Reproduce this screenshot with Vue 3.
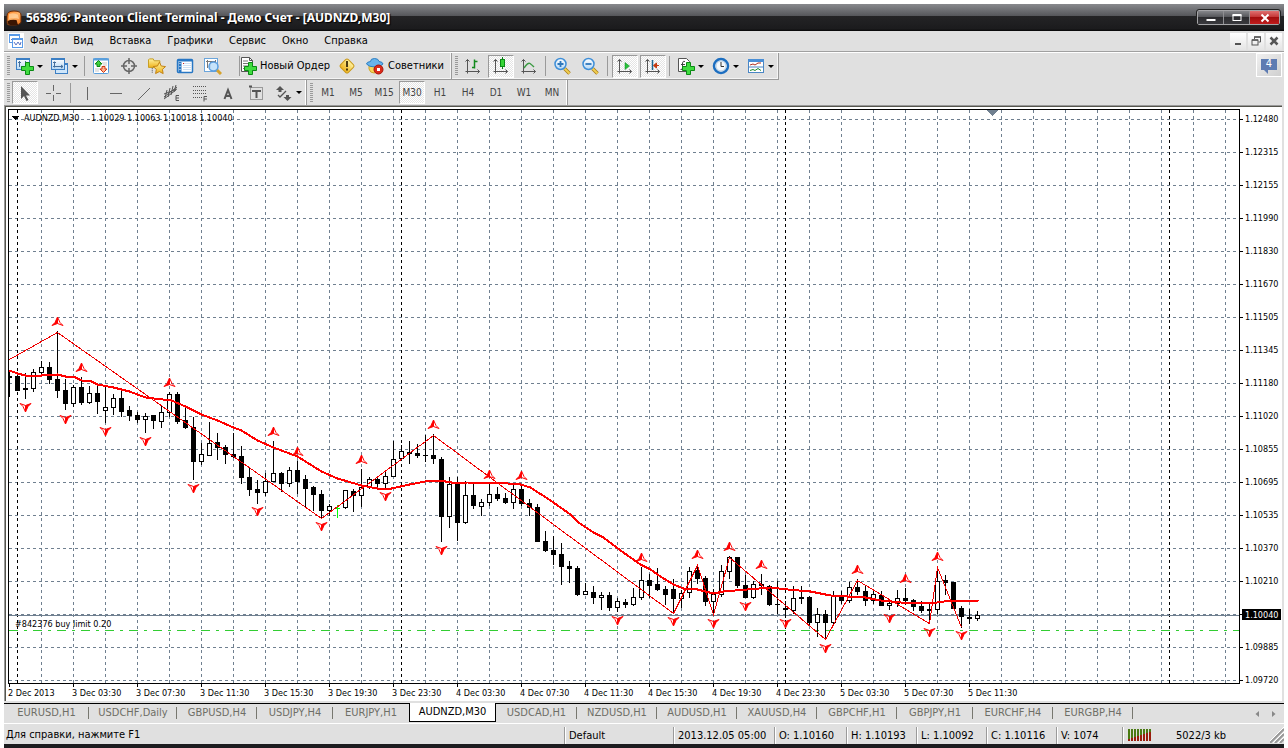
<script setup>
const menus = ['Файл', 'Вид', 'Вставка', 'Графики', 'Сервис', 'Окно', 'Справка']

const standardBar = [
  { icon: 'new-chart', label: 'Новый график', drop: true },
  { icon: 'profiles', label: 'Профили', drop: true },
  { sep: 'a' },
  { icon: 'market', label: 'Обзор рынка' },
  { icon: 'target', label: 'Окно данных' },
  { icon: 'navigator', label: 'Навигатор' },
  { icon: 'terminal', label: 'Терминал' },
  { icon: 'tester', label: 'Тестер стратегий' },
  { sep: 'b' },
  { icon: 'order', text: 'Новый Ордер' },
  { icon: 'warning', label: 'Редактор' },
  { icon: 'experts', text: 'Советники' }
]
const chartBar = [
  { icon: 'bars', label: 'Бары' },
  { icon: 'candles', label: 'Свечи', on: true },
  { icon: 'line', label: 'Линия' },
  { sep: 'c' },
  { icon: 'zoom-in', label: 'Увеличить' },
  { icon: 'zoom-out', label: 'Уменьшить' },
  { sep: 'd' },
  { icon: 'scroll', label: 'Автопрокрутка', on: true },
  { icon: 'shift', label: 'Сдвиг графика', on: true },
  { sep: 'c' },
  { icon: 'indicators', label: 'Индикаторы', drop: true },
  { icon: 'clock', label: 'Периоды', drop: true },
  { icon: 'template', label: 'Шаблоны', drop: true }
]
const drawBar = [
  { icon: 'cursor', label: 'Курсор', on: true },
  { icon: 'cross', label: 'Перекрестие' },
  { sep: 'd' },
  { icon: 'vline', label: 'Вертикальная линия' },
  { icon: 'hline', label: 'Горизонтальная линия' },
  { icon: 'trend', label: 'Трендовая линия' },
  { icon: 'channel', label: 'Канал' },
  { icon: 'fibo', label: 'Фибоначчи' },
  { icon: 'text', label: 'Текст' },
  { icon: 'label', label: 'Метка' },
  { icon: 'arrows', label: 'Стрелки', drop: true }
]
const periods = ['M1', 'M5', 'M15', 'M30', 'H1', 'H4', 'D1', 'W1', 'MN']

const tabs = [
  ['EURUSD,H1', 85], ['USDCHF,Daily', 88], ['GBPUSD,H4', 80], ['USDJPY,H4', 76], ['EURJPY,H1', 76],
  ['AUDNZD,M30', 87], ['USDCAD,H1', 81], ['NZDUSD,H1', 80], ['AUDUSD,H1', 80], ['XAUUSD,H4', 80],
  ['GBPCHF,H1', 80], ['GBPJPY,H1', 76], ['EURCHF,H4', 80], ['EURGBP,H4', 80]
]
const activeTab = 5

const prices = ['1.12480', '1.12315', '1.12155', '1.11990', '1.11830', '1.11670', '1.11505', '1.11345', '1.11180',
  '1.11020', '1.10855', '1.10695', '1.10535', '1.10370', '1.10210', '', '1.09885', '1.09720']
const times = ['2 Dec 2013', '3 Dec 03:30', '3 Dec 07:30', '3 Dec 11:30', '3 Dec 15:30', '3 Dec 19:30', '3 Dec 23:30',
  '4 Dec 03:30', '4 Dec 07:30', '4 Dec 11:30', '4 Dec 15:30', '4 Dec 19:30', '4 Dec 23:30', '5 Dec 03:30', '5 Dec 07:30', '5 Dec 11:30']

const gridX = Array.from({ length: 80 }, (_, i) => 32 + i * 32)
const gridY = Array.from({ length: 18 }, (_, i) => 9 + i * 33)
const dayX = [8, 392, 776, 1160]

/* body top, body bottom, high, low, 1 = falling / 0 = rising */
const raw = [
  [376, 378, 372, 397, 1], [376, 391, 375, 391, 1], [388, 390, 373, 399, 0], [372, 389, 369, 392, 0], [367, 373, 361, 376, 0],
  [367, 380, 362, 384, 1], [379, 391, 331, 398, 1], [390, 404, 379, 410, 1], [387, 404, 385, 407, 0], [387, 403, 377, 405, 1],
  [393, 403, 386, 404, 0], [393, 402, 383, 414, 1], [407, 411, 385, 423, 0], [398, 408, 394, 415, 0], [398, 412, 390, 417, 1],
  [410, 416, 406, 421, 1], [415, 420, 412, 423, 1], [416, 420, 413, 433, 0], [415, 421, 415, 429, 1], [412, 422, 405, 428, 0],
  [394, 413, 392, 417, 0], [394, 422, 392, 424, 1], [420, 428, 405, 429, 1], [427, 462, 417, 480, 1], [454, 462, 443, 465, 0],
  [443, 456, 422, 456, 0], [442, 448, 433, 460, 1], [447, 455, 445, 464, 1], [454, 457, 433, 458, 1], [456, 478, 446, 484, 1],
  [477, 490, 467, 496, 1], [489, 493, 480, 504, 1], [481, 493, 473, 496, 0], [473, 482, 441, 482, 0], [473, 484, 472, 492, 1],
  [470, 484, 467, 487, 0], [470, 482, 461, 494, 1], [479, 489, 475, 507, 1], [487, 495, 486, 511, 1], [494, 511, 490, 518, 1],
  [506, 511, 504, 516, 0], [508, 509, 505, 518, 2], [490, 508, 490, 509, 0], [491, 496, 489, 512, 1], [487, 496, 469, 507, 0],
  [479, 487, 477, 489, 0], [479, 484, 478, 488, 1], [476, 484, 471, 488, 0], [459, 477, 441, 477, 0], [451, 459, 445, 459, 0],
  [452, 454, 441, 464, 1], [453, 456, 444, 458, 1], [455, 456, 435, 462, 1], [455, 459, 434, 464, 1], [459, 517, 457, 542, 1],
  [484, 517, 477, 528, 0], [484, 523, 477, 541, 1], [495, 523, 481, 524, 0], [495, 506, 484, 509, 1], [502, 507, 499, 516, 0],
  [494, 503, 483, 506, 0], [494, 499, 487, 501, 1], [498, 503, 493, 504, 1], [489, 503, 484, 509, 0], [489, 504, 485, 506, 1],
  [503, 508, 499, 516, 1], [507, 542, 504, 542, 1], [541, 551, 531, 552, 1], [550, 555, 536, 565, 1], [554, 567, 543, 585, 1],
  [566, 569, 561, 583, 1], [568, 595, 566, 596, 1], [591, 595, 583, 595, 0], [592, 598, 586, 604, 1], [595, 598, 592, 610, 0],
  [595, 608, 592, 611, 1], [601, 608, 598, 612, 0], [602, 605, 599, 608, 1], [597, 605, 588, 606, 0], [580, 598, 567, 600, 0],
  [580, 586, 574, 598, 1], [584, 590, 568, 591, 1], [589, 595, 586, 605, 1], [589, 599, 579, 614, 1], [593, 599, 590, 608, 0],
  [571, 593, 567, 598, 0], [570, 579, 564, 584, 1], [578, 602, 576, 606, 1], [594, 602, 589, 616, 0], [571, 595, 565, 597, 0],
  [557, 572, 556, 579, 0], [557, 586, 557, 588, 1], [585, 598, 575, 598, 1], [584, 598, 581, 599, 0], [584, 586, 574, 595, 1],
  [586, 605, 585, 606, 1], [604, 605, 581, 614, 1], [608, 610, 601, 618, 1], [598, 611, 586, 614, 0], [597, 599, 586, 604, 1],
  [597, 623, 596, 626, 1], [614, 623, 608, 637, 0], [614, 623, 610, 640, 1], [595, 623, 591, 626, 0], [595, 601, 591, 604, 1],
  [587, 601, 582, 603, 0], [587, 592, 579, 595, 1], [591, 601, 586, 606, 1], [594, 601, 590, 604, 0], [595, 606, 591, 606, 1],
  [603, 606, 599, 610, 0], [598, 604, 590, 607, 0], [598, 601, 588, 605, 1], [600, 607, 599, 611, 1], [606, 611, 601, 613, 1],
  [609, 611, 602, 624, 1], [581, 610, 566, 614, 0], [580, 583, 575, 595, 1], [582, 609, 582, 609, 1], [608, 617, 606, 628, 1],
  [617, 619, 609, 624, 1], [615, 619, 611, 621, 0]
]
const kinds = ['up', 'down', 'flat']
const candles = raw.map(([t, b, h, l, k], i) => ({ x: i * 8, t: t - 110, b: b - 110, h: h - 110, l: l - 110, kind: kinds[k] }))

const line = pts => pts.map(([x, y]) => `${x - 8.5},${y - 109.5}`).join(' ')
const average = line([[9, 370], [17, 373], [25, 375], [41, 375], [57, 374], [65, 376], [75, 377], [81, 380], [91, 381], [97, 384], [113, 387], [129, 391],
  [145, 397], [153, 398], [171, 400], [185, 406], [201, 414], [217, 420], [233, 427], [241, 430], [257, 440], [273, 447], [297, 456],
  [321, 471], [337, 478], [361, 485], [377, 488], [391, 488], [409, 484], [430, 480], [439, 480], [457, 483], [467, 482], [495, 482], [520, 484],
  [530, 487], [550, 500], [570, 514], [578, 522], [593, 532], [603, 537], [620, 550], [640, 564], [650, 569], [660, 576], [673, 584],
  [683, 588], [697, 589], [713, 593], [723, 591], [747, 589], [770, 587], [787, 589], [810, 591], [830, 595], [847, 596],
  [860, 596], [880, 600], [900, 602], [930, 603], [950, 600], [978, 601]])
const zigzag = line([[9, 359], [57, 332], [321, 518], [433, 435], [673, 613], [697, 565], [713, 614], [729, 557], [825, 639],
  [857, 580], [929, 623], [937, 567], [961, 627]])
const upMarks = [[57, 321], [81, 367], [169, 382], [273, 431], [297, 451], [361, 459], [433, 424], [489, 474], [521, 475], [641, 557],
  [697, 554], [729, 546], [761, 564], [857, 569], [905, 578], [937, 556]]
const downMarks = [[25, 407], [65, 419], [105, 431], [145, 441], [193, 488], [257, 511], [321, 526], [385, 496], [441, 550], [617, 620],
  [673, 621], [713, 623], [745, 606], [785, 623], [825, 648], [889, 618], [929, 632], [961, 635]]
const at = ([x, y]) => `translate(${x - 8.5} ${y - 109.5})`
</script>

<template>
  <svg class="defs" aria-hidden="true">
    <defs>
      <linearGradient id="g-blue" x1="0" y1="0" x2="0" y2="1"><stop offset="0" stop-color="#fff" /><stop offset="1" stop-color="#b5d8f5" /></linearGradient>
      <linearGradient id="g-gold" x1="0" y1="0" x2="0" y2="1"><stop offset="0" stop-color="#fff3a0" /><stop offset="1" stop-color="#efb21c" /></linearGradient>
      <linearGradient id="g-orange" x1="0" y1="0" x2="1" y2="1"><stop offset="0" stop-color="#ff7a12" /><stop offset=".5" stop-color="#ffb46a" /><stop offset="1" stop-color="#e86a10" /></linearGradient>
      <path id="plus" d="M4 0h4v4h4v4h-4v4h-4v-4h-4v-4h4z" fill="#3fdc3f" stroke="#0a8a14" />
      <path id="axes" d="M3.500 16.500v-14M1.500 4.500l2-2 2 2M1.500 14.500h14M13.500 12.500l2 2-2 2" fill="none" stroke="#555" />
    </defs>
    <symbol id="i-new-chart" viewBox="0 0 18 18">
      <rect x=".5" y="1.500" width="13" height="11" fill="url(#g-blue)" stroke="#3c7fc4" /><path d="M1 2.500h12" stroke="#3c7fc4" />
      <path d="M3.500 4v6M2 5.500h3M9.500 4v5M5 9.500h3" stroke="#456f9c" fill="none" /><use href="#plus" x="5.500" y="5.500" />
    </symbol>
    <symbol id="i-profiles" viewBox="0 0 18 18">
      <rect x="4.500" y="6.500" width="12" height="10" fill="#cfe6fa" stroke="#3c7fc4" /><path d="M4 7.500h13" stroke="#3c7fc4" />
      <rect x=".5" y="1.500" width="13" height="11" fill="url(#g-blue)" stroke="#3c7fc4" /><path d="M1 2h12" stroke="#3c7fc4" stroke-width="2" />
      <path d="M3.500 4.500v6M2 9.500h10M2 5.500h3M10 8l2 1.500-2 1.500" stroke="#456f9c" fill="none" />
    </symbol>
    <symbol id="i-market" viewBox="0 0 18 18">
      <rect x="1.500" y="1.500" width="15" height="15" rx="1" fill="#fff" stroke="#5a9fdc" /><path d="M1 2.500h16" stroke="#5a9fdc" stroke-width="2" />
      <path d="M3 12h5M3 14h4M10 6h5M11 8h4" stroke="#c9c9c9" /><path d="M6.500 3.500l3.500 3.500h-2v2.500h-3v-2.500h-2z" fill="#3fcf3f" stroke="#0c8a14" /><path d="M11.500 15.500l-3.500-3.500h2v-2.500h3v2.500h2z" fill="#ffb190" stroke="#cf3a12" />
    </symbol>
    <symbol id="i-target" viewBox="0 0 18 18">
      <circle cx="9" cy="9" r="5.500" fill="none" stroke="#666" stroke-width="1.500" /><path d="M9 1v6M9 11v6M1 9h6M11 9h6" stroke="#666" stroke-width="1.500" />
    </symbol>
    <symbol id="i-navigator" viewBox="0 0 19 18">
      <path d="M.5 2.500l1-1h4l1 2h6v7h-12z" fill="url(#g-gold)" stroke="#c59a1c" /><path d="M4.500 11v5" stroke="#444" stroke-dasharray="1 1" />
      <path d="M12 5l2 4 4.500.6-3.300 3 .8 4.400-4-2.100-4 2.100.8-4.400-3.300-3 4.500-.6z" fill="url(#g-gold)" stroke="#c07e10" />
    </symbol>
    <symbol id="i-terminal" viewBox="0 0 18 18">
      <rect x="1.500" y="2.500" width="15" height="13" rx="1" fill="#fff" stroke="#2877c4" stroke-width="1.500" /><path d="M2 3.500h14" stroke="#2877c4" stroke-width="2" />
      <path d="M4 5v10" stroke="#2877c4" stroke-width="3" /><path d="M4 6v8" stroke="#fff" stroke-dasharray="1 2" /><path d="M7 6.500h8M7 8.500h8M7 10.500h8M7 12.500h8" stroke="#cfe0f2" /><path d="M7 6.500h1" stroke="#d02020" />
    </symbol>
    <symbol id="i-tester" viewBox="0 0 18 18">
      <rect x=".5" y="1.500" width="13" height="13" fill="#fff" stroke="#6ba5db" /><path d="M3.500 3v8M6.500 4v7M11.500 3v4M2 4.500h10" stroke="#777" />
      <path d="M12 12l5 5" stroke="#d6a22b" stroke-width="3" /><circle cx="9.500" cy="9.500" r="4.500" fill="#bfe0fb" fill-opacity=".9" stroke="#5a9ee0" stroke-width="1.500" />
    </symbol>
    <symbol id="i-order" viewBox="1 0 18 18">
      <path d="M1.500.5h8l3 3v11h-11z" fill="#fff" stroke="#555" /><path d="M9.500.5v3h3" fill="none" stroke="#555" /><path d="M3 4h5M3 6.500h8M3 9h5M3 11.500h4" stroke="#777" stroke-width="1" /><use href="#plus" x="4.500" y="5.500" />
    </symbol>
    <symbol id="i-warning" viewBox="0 0 18 18">
      <rect x="3.500" y="3.500" width="11" height="11" rx="2" transform="rotate(45 9 9)" fill="url(#g-gold)" stroke="#c9981c" /><path d="M9 4v6M9 11.500v2" stroke="#4c3a10" stroke-width="2" />
    </symbol>
    <symbol id="i-experts" viewBox="1 0 18 18">
      <path d="M4 8q6 3 11 0v4q-2 4-6 4t-5-4z" fill="#f7d65a" stroke="#cda42a" /><path d="M1.500 7q0-2 4-2.500 0-3 4-3t4.500 3q4 .5 4 2.500-2 3-8 3t-8.500-3z" fill="#69b4ec" stroke="#2c7ec2" />
      <circle cx="13.500" cy="12.500" r="4.500" fill="#dc2a1a" stroke="#a81408" /><rect x="12" y="11" width="3" height="3" fill="#fff" />
    </symbol>
    <symbol id="i-bars" viewBox="0 0 18 18"><use href="#axes" /><path d="M10.500 2.500v9M10.500 4.500h3M8 10.500h3" stroke="#128a1c" stroke-width="1.500" fill="none" /></symbol>
    <symbol id="i-candles" viewBox="0 0 18 18"><use href="#axes" /><path d="M10.500 0v12" stroke="#0a7a14" /><rect x="8.500" y="2.500" width="4" height="7" fill="#35d435" stroke="#0a8a14" /></symbol>
    <symbol id="i-line" viewBox="0 0 18 18"><use href="#axes" /><path d="M4 11q4-6 6-4.500t4 3.500" stroke="#3a9a42" stroke-width="1.500" fill="none" /></symbol>
    <symbol id="i-scroll" viewBox="0 0 18 18"><use href="#axes" /><path d="M9 5.500v7l4.500-3.500z" fill="#28c23a" stroke="#0b8a1c" stroke-width=".5" /></symbol>
    <symbol id="i-shift" viewBox="0 0 18 18"><use href="#axes" /><path d="M8.500 3v10" stroke="#1b6690" stroke-width="1.500" /><path d="M15 8.500h-5M12.500 6l-3 2.500 3 2.500z" stroke="#c53a10" fill="#c53a10" /></symbol>
    <symbol id="i-zoom-in" viewBox="0 0 18 18">
      <path d="M11.500 11.500l5 5" stroke="#a97b17" stroke-width="3.500" /><path d="M11.500 11.500l5 5" stroke="#f0cf52" stroke-width="2" /><circle cx="7.500" cy="7" r="5.500" fill="url(#g-blue)" stroke="#3f8fd8" stroke-width="1.500" /><path d="M7.500 4v6M4.500 7h6" stroke="#2f78bb" stroke-width="1.800" />
    </symbol>
    <symbol id="i-zoom-out" viewBox="0 0 18 18">
      <path d="M11.500 11.500l5 5" stroke="#a97b17" stroke-width="3.500" /><path d="M11.500 11.500l5 5" stroke="#f0cf52" stroke-width="2" /><circle cx="7.500" cy="7" r="5.500" fill="url(#g-blue)" stroke="#3f8fd8" stroke-width="1.500" /><path d="M4.500 7h6" stroke="#2f78bb" stroke-width="1.800" />
    </symbol>
    <symbol id="i-indicators" viewBox="0 0 18 18">
      <path d="M1.500 1.500h8l3 3v10h-11z" fill="#fff" stroke="#555" /><path d="M8 4.500q-2-1-2.500 1.500v5q0 2-2 1.500M4 7.500h4" stroke="#444" fill="none" /><use href="#plus" x="5.500" y="5.500" />
    </symbol>
    <symbol id="i-clock" viewBox="0 0 18 18"><circle cx="9" cy="9" r="7" fill="#f4f8fc" stroke="#1c6ec0" stroke-width="2.500" /><circle cx="9" cy="9" r="5" fill="none" stroke="#b7cde0" /><path d="M9 5v4.500h3" stroke="#333" fill="none" /></symbol>
    <symbol id="i-template" viewBox="0 0 18 18">
      <rect x="1.500" y="2.500" width="15" height="13" fill="#fff" stroke="#4a86c4" /><path d="M1 3.500h16" stroke="#4a8fd6" stroke-width="3" /><path d="M2 10h14" stroke="#4a86c4" />
      <path d="M3 8l3-1 2 1 3-2h3" fill="none" stroke="#b03020" /><path d="M3 13.500l3-1 2 1 3-2 3 2" fill="none" stroke="#1c8a2c" />
    </symbol>
    <symbol id="i-cursor" viewBox="0 0 18 18"><path d="M5 2v13l3-3 2.500 5 2-1-2.500-4.500h4z" fill="#555" /></symbol>
    <symbol id="i-cross" viewBox="0 0 18 18"><path d="M9.500 1v6M9.500 11v6M2 9.500h5M12 9.500h5" stroke="#666" /></symbol>
    <symbol id="i-vline" viewBox="0 0 18 18"><path d="M8.500 3v13" stroke="#666" /></symbol>
    <symbol id="i-hline" viewBox="0 0 18 18"><path d="M3 9.500h12" stroke="#666" /></symbol>
    <symbol id="i-trend" viewBox="0 0 18 18"><path d="M3 16l12-12" stroke="#666" /></symbol>
    <symbol id="i-channel" viewBox="0 0 18 18"><path d="M1 13l13-10M4 6l-2 8M7 4l-2 9M10 2l-2 9M13 1l-2 7M1 10l13-5M1 15l12-9" stroke="#555" fill="none" /><path d="M16 11.500h-3v5h3M13 14h3" stroke="#555" fill="none" /></symbol>
    <symbol id="i-fibo" viewBox="0 0 18 18"><path d="M2 2.500h14M2 6.500h14M2 9.500h14M2 13.500h9" stroke="#555" stroke-dasharray="1 1" /><path d="M16 12.500h-3v5M13 15h3" stroke="#555" fill="none" /></symbol>
    <symbol id="i-text" viewBox="0 0 18 18"><path d="M5.500 15l3.500-9 3.500 9M7 12h4.500" stroke="#555" stroke-width="2" fill="none" /></symbol>
    <symbol id="i-label" viewBox="0 0 18 18"><rect x="3.500" y="3.500" width="12" height="12" fill="none" stroke="#555" stroke-dasharray="1 1" /><path d="M5 7h9M9.500 7v7M2 2.500h3" stroke="#555" stroke-width="2" /></symbol>
    <symbol id="i-arrows" viewBox="0 0 18 18"><path d="M5 2l4 4h-2.500v2h-3v-2h-2.500zM12.500 17l-4-4h2.500v-2h3v2h2.500z" fill="#555" /><path d="M3 11l2 2 6-6" stroke="#555" fill="none" stroke-width="1.300" /></symbol>
  </svg>

  <main class="window">
    <header class="title">
      <svg class="logo" viewBox="0 0 16 16" aria-hidden="true"><path d="M1 6q0-5 7-5t7 4v7q-1 3-7 3h-5q-2 0-2-3z" fill="url(#g-orange)" stroke="#6b2a04" /><path d="M3 4q5-2 9 1l1 4q-5-2-10 0z" fill="#ffd9a8" opacity=".7" /><path d="M1.500 11q4-2 9-1l1.500 5h-8q-2.500-.5-2.500-4z" fill="#3a1502" /></svg>
      <h1>565896: Panteon Client Terminal - Демо Счет - [AUDNZD,M30]</h1>
      <div class="win-buttons">
        <button aria-label="Свернуть"><svg viewBox="0 0 12 10"><path d="M1.500 7h9" stroke="#fff" stroke-width="2" /></svg></button>
        <button aria-label="Развернуть"><svg viewBox="0 0 12 10"><rect x="2" y="2.500" width="8" height="5" fill="none" stroke="#fff" /><path d="M1.500 2h9" stroke="#fff" stroke-width="2" /></svg></button>
        <button class="close" aria-label="Закрыть"><svg viewBox="0 0 12 10"><path d="M2.500 1.500l7 7M9.500 1.500l-7 7" stroke="#fff" stroke-width="2" /></svg></button>
      </div>
    </header>

    <nav class="menu">
      <svg class="menu-icon" viewBox="0 0 16 16" aria-hidden="true"><rect width="16" height="16" fill="#fff" /><rect x="1.500" y="1.500" width="10" height="8" fill="#fff" stroke="#5a9be8" /><path d="M1 2h11" stroke="#5a9be8" stroke-width="2" /><path d="M3 7l2-2" stroke="#5b76c4" /><rect x="4.500" y="5.500" width="10" height="9" fill="#fff" stroke="#5a9be8" /><path d="M4 6h11" stroke="#5a9be8" stroke-width="2" /><path d="M6 9l2 3 2-3 2 3 1-3" fill="none" stroke="#5b76c4" /></svg>
      <button v-for="m in menus" :key="m" class="menu-item">{{ m }}</button>
      <div class="mdi">
        <button aria-label="Свернуть окно"><svg viewBox="0 0 10 10"><path d="M2 8h6" stroke="#555" stroke-width="2" /></svg></button>
        <button aria-label="Восстановить окно"><svg viewBox="0 0 10 10"><path d="M3.500 3v-2h6v5h-2" fill="none" stroke="#555" /><rect x="1" y="4" width="6" height="5" fill="none" stroke="#555" /><path d="M1 4h6M3 1h7" stroke="#555" stroke-width="1.500" /></svg></button>
        <button aria-label="Закрыть окно"><svg viewBox="0 0 10 10"><path d="M1.500 1.500l7 7M8.500 1.500l-7 7" stroke="#555" stroke-width="2.500" /></svg></button>
      </div>
    </nav>

    <div class="tools first">
      <div v-for="(bar, n) in [standardBar, chartBar]" :key="n" class="bar">
        <i class="grip"></i>
        <template v-for="(b, i) in bar" :key="i">
          <i v-if="b.sep" :class="['sep', 'sep-' + b.sep]"></i>
          <button v-else :class="['tb', { on: b.on, drop: b.drop, wide: b.text }]" :aria-label="b.text || b.label">
            <svg class="ic"><use :href="'#i-' + b.icon" /></svg><span v-if="b.text">{{ b.text }}</span><i v-if="b.drop" class="caret"></i>
          </button>
        </template>
      </div>
      <button class="news"><svg viewBox="0 0 16 16" aria-hidden="true"><path d="M0 1h16v11h-9v4l-4-4h-3z" fill="#5d7bb2" /></svg><span>4</span></button>
    </div>
    <div class="tools second">
      <div class="bar">
        <i class="grip"></i>
        <template v-for="(b, i) in drawBar" :key="i">
          <i v-if="b.sep" :class="['sep', 'sep-' + b.sep]"></i>
          <button v-else :class="['tb', { on: b.on, drop: b.drop }]" :aria-label="b.label">
            <svg class="ic"><use :href="'#i-' + b.icon" /></svg><i v-if="b.drop" class="caret"></i>
          </button>
        </template>
      </div>
      <div class="bar">
        <i class="grip"></i>
        <button v-for="p in periods" :key="p" :class="['tb', 'period', { on: p === 'M30' }]">{{ p }}</button>
      </div>
    </div>

    <section class="chart">
      <svg class="plot" shape-rendering="crispEdges">
        <g class="grid">
          <line v-for="y in gridY" :key="'h' + y" x1="0" x2="100%" :y1="y + .5" :y2="y + .5" />
          <line v-for="x in gridX" :key="'v' + x" :x1="x + .5" :x2="x + .5" y1="0" y2="100%" />
        </g>
        <line v-for="x in dayX" :key="'d' + x" class="day" :x1="x + .5" :x2="x + .5" y1="0" y2="100%" />
        <line class="bid" x1="0" x2="100%" y1="505.5" y2="505.5" />
        <line class="limit" x1="0" x2="100%" y1="520.5" y2="520.5" />
        <g v-for="c in candles" :key="c.x" :class="c.kind">
          <rect :x="c.x" :y="c.h" width="1" :height="c.l - c.h" class="wick" />
          <rect v-if="c.kind === 'up'" :x="c.x - 1.5" :y="c.t + .5" width="4" :height="Math.max(c.b - c.t - 1, 1)" class="body" />
          <rect v-else :x="c.x - 2" :y="c.t" width="5" :height="c.b - c.t" class="body" />
        </g>
        <polyline class="zigzag" :points="zigzag" />
        <polyline class="average" :points="average" />
        <g class="marks">
          <g v-for="(m, i) in upMarks" :key="'u' + i" :transform="at(m)"><path class="fill" d="M0-4.500l-2.500 5.500-3 3 5.500-2z" /><path d="M0-4.500l2.500 5.500 3 3-5.500-2" /></g>
          <g v-for="(m, i) in downMarks" :key="'n' + i" :transform="at(m)"><path class="fill" d="M0 4.500l2.500-5.500 3-3-5.500 2z" /><path d="M0 4.500l-2.500-5.500-3-3 5.500 2" /></g>
        </g>
        <path class="shift-mark" d="M978 0h11l-5.500 6z" />
        <path d="M3 6h7l-3.500 4z" />
        <text x="15" y="11">AUDNZD,M30</text><text x="82" y="11">1.10029 1.10063 1.10018 1.10040</text>
        <text x="6" y="517">#842376 buy limit 0.20</text>
      </svg>
      <svg class="price-axis" shape-rendering="crispEdges">
        <g v-for="(p, i) in prices" :key="i"><template v-if="p"><path class="tick" :d="`M0 ${10.5 + i * 33}h3`" /><text x="5" :y="13 + i * 33">{{ p }}</text></template></g>
        <rect x="2" y="500" width="39" height="11" /><path class="tick" d="M0 505.500h3" /><text class="current" x="5" y="509">1.10040</text>
      </svg>
      <svg class="time-axis" shape-rendering="crispEdges">
        <g v-for="(t, i) in times" :key="i"><path class="tick" :d="`M${1.5 + i * 64} 0v3`" /><text :x="i * 64" y="12">{{ t }}</text></g>
      </svg>
    </section>

    <div class="tabs" role="tablist">
      <button v-for="([name, w], i) in tabs" :key="name" role="tab" :aria-selected="i === activeTab"
        :class="['tab', { active: i === activeTab, before: i === activeTab - 1 }]" :style="{ width: w + 'px' }">{{ name }}</button>
      <div class="scroller"><button aria-label="Назад"><svg viewBox="0 0 6 8"><path d="M5 1v6l-3.500-3z" fill="#888" /></svg></button><button aria-label="Вперёд"><svg viewBox="0 0 6 8"><path d="M1 1v6l3.500-3z" fill="#888" /></svg></button></div>
    </div>

    <footer class="status">
      <span class="hint">Для справки, нажмите F1</span>
      <span class="cell profile">Default</span>
      <span class="cell date">2013.12.05 05:00</span>
      <span class="cell open">O: 1.10160</span>
      <span class="cell">H: 1.10193</span>
      <span class="cell">L: 1.10092</span>
      <span class="cell">C: 1.10116</span>
      <span class="cell volume">V: 1074</span>
      <span class="cell link">
        <svg viewBox="0 0 24 12" shape-rendering="crispEdges" aria-hidden="true">
          <g v-for="i in 8" :key="i"><rect :x="i * 3 - 3" y="0" width="2" :height="11 - i" fill="#4a7a12" /><rect :x="i * 3 - 3" :y="11 - i" width="2" :height="i + 1" fill="#9a1c0c" /></g>
        </svg>
        5022/3 kb
        <svg class="size-grip" viewBox="0 0 14 16" aria-hidden="true"><path d="M0 16l14-14M5 16l9-9M10 16l4-4" stroke="#999" stroke-width="2" /><path d="M-2 16l16-16M3 16l11-11M8 16l6-6" stroke="#fff" /></svg>
      </span>
    </footer>
  </main>
</template>

<style>
body { background: #fff; }
</style>

<style scoped>
.window { display: flex; flex-direction: column; box-sizing: border-box; height: 100vh; min-height: 700px; padding: 4px 4px 0; font: 11px/14px "DejaVu Sans Condensed", "DejaVu Sans", sans-serif; color: #000; overflow: hidden; }
button { border: 0; padding: 0; margin: 0; background: none; font: inherit; color: inherit; }
.defs { position: absolute; width: 0; height: 0; }

.title { flex: none; display: flex; align-items: center; height: 27px; padding: 0 4px 0 2px; background: linear-gradient(#88898d, #55565a 12px, #242426 12px, #1b1b1d 25px, #050506 27px); }
.logo { width: 16px; height: 16px; }
h1 { flex: 1; margin: 0 0 0 4px; font: bold 12px/16px "Noto Sans", "Open Sans", sans-serif; color: #fff; text-shadow: 1px 1px 1px #000; white-space: nowrap; }
.win-buttons { display: flex; border: 1px solid #a5a5a8; border-radius: 2px; outline: 1px solid #222; }
.win-buttons button { display: flex; align-items: center; justify-content: center; width: 26px; height: 13px; border-right: 1px solid #8f8f92; background: linear-gradient(#85868a, #55565a 6px, #2b2b2e 6px, #3a3a3e); }
.win-buttons svg { width: 12px; height: 10px; }
.win-buttons .close { width: 29px; border: 0; background: linear-gradient(#df7070, #c43535 6px, #a00c0c 6px, #c01c1c); }

.menu { flex: none; display: flex; align-items: center; gap: 16px; height: 20px; padding: 0 2px 0 4px; background: #e0e0e0; border-bottom: 1px solid #a0a0a0; box-shadow: 0 1px #fff; margin-bottom: 1px; }
.menu-icon { width: 16px; height: 16px; margin-right: -10px; }
.menu-item { white-space: nowrap; }
.mdi { display: flex; gap: 2px; margin-left: auto; }
.mdi button { display: flex; align-items: center; justify-content: center; width: 16px; height: 17px; background: linear-gradient(#fff, #e4e4e4); }
.mdi svg { width: 10px; height: 10px; }

.tools { flex: none; display: flex; background: #e0e0e0; }
.bar { display: flex; align-items: center; height: 25px; padding: 0 1px 0 3px; border-right: 1px solid #9a9a9a; border-bottom: 1px solid #9a9a9a; box-shadow: inset -1px 0 #fff; }
.first .bar { height: 26px; box-shadow: inset -1px -1px #f4f4f4; }
.second .bar { border-bottom: 0; }
.bar + .bar { padding-left: 3px; }
.grip { width: 3px; height: 20px; margin-right: 1px; background: repeating-linear-gradient(#9a9a9a 0 1px, #e0e0e0 1px 2px); }
.tb { display: flex; flex: none; align-items: center; justify-content: center; box-sizing: border-box; width: 28px; height: 24px; position: relative; white-space: nowrap; }
.tb.on { width: 26px; margin: 0 1px; height: 23px; border: 1px solid; border-color: #9a9a9a #fff #fff #9a9a9a; background: repeating-conic-gradient(#fff 0 25%, #e4e4e4 0 50%) 0 0 / 2px 2px; }
.ic { width: 18px; height: 18px; flex: none; }
.tb.drop { width: 35px; justify-content: flex-start; padding-left: 5px; gap: 3px; }
.tb.wide { width: 92px; gap: 1px; justify-content: flex-start; }
.tb.wide:last-child { width: 89px; padding-left: 5px; gap: 4px; }
.caret { border: 3px solid transparent; border-top-color: #000; border-bottom: 0; }
.sep { width: 1px; height: 20px; background: #9a9a9a; }
.sep-a { margin: 0 2px 0 3px; }
.sep-b { margin: 0 1px 0 12px; }
.sep-c { margin: 0 2px; }
.sep-d { margin: 0 3px; }
.period { font-size: 10px; color: #444; }
.news { position: relative; width: 26px; height: 24px; margin-left: auto; margin-right: 2px; border: 1px solid #fff; background: linear-gradient(135deg, #f0f0f0, #cfcfcf); color: #fff; }
.news svg { position: absolute; left: 4px; top: 4px; width: 16px; height: 16px; }
.news span { position: absolute; left: 0; right: 0; top: 3px; }

.chart { flex: 1; min-height: 0; display: grid; grid-template: minmax(0, 1fr) 17px / minmax(0, 1fr) 42px; background: #fff; border: solid #e0e0e0; border-width: 0 2px 2px 0; box-shadow: inset 1px 1px #9a9a9a, inset 2px 2px #55554d; padding: 4px 0 0 4px; font-size: 9px; }
.chart svg { width: 100%; height: 100%; display: block; overflow: hidden; }
.plot { box-sizing: border-box; border: 1px solid #000; }
.time-axis { grid-column: 1 / 3; }
.tick { stroke: #000; }
.current { fill: #fff; }
.grid line { stroke: #708090; stroke-dasharray: 3 3; }
.day { stroke: #000; stroke-dasharray: 3 3; }
.bid { stroke: #708090; }
.limit { stroke: #32cd32; stroke-dasharray: 9 6 3 6; }
.up .body { fill: #fff; stroke: #000; }
.flat rect { fill: #0f0; }
.zigzag { fill: none; stroke: #f00000; }
.average { fill: none; stroke: #f00; stroke-width: 2; }
.marks { shape-rendering: auto; }
.marks path { fill: none; stroke: #f00; stroke-width: 1; }
.marks .fill { fill: #f00; }
.shift-mark { fill: #708090; }

.tabs { flex: none; display: flex; height: 21px; background: #e0e0e0; box-shadow: inset 0 1px #000, inset 0 -1px #fff; }
.tab { flex: none; box-sizing: border-box; height: 19px; color: #6e6e66; position: relative; white-space: nowrap; }
.tab:not(.active):not(.before)::after { content: ""; position: absolute; right: 0; top: 4px; width: 1px; height: 12px; background: #77776f; }
.tab.active { color: #000; background: #fff; border: solid #000; border-width: 0 1px 1px; }
.scroller { display: flex; align-items: center; gap: 11px; margin-left: auto; padding-right: 7px; }
.scroller svg { width: 6px; height: 8px; display: block; }

.status { flex: none; display: flex; align-items: center; height: 18px; padding-top: 2px; background: #e0e0e0; border-bottom: 4px solid #1c1c1f; }
.hint { flex: 1; padding-left: 2px; }
.cell { box-sizing: border-box; width: 70px; height: 17px; padding-left: 4px; line-height: 17px; border-left: 1px solid #9a9a9a; box-shadow: inset 1px 0 #fff; white-space: nowrap; }
.profile { width: 109px; }
.date { width: 101px; }
.open { width: 72px; }
.volume { width: 66px; }
.link { display: flex; align-items: center; gap: 24px; width: 162px; padding-left: 5px; }
.link svg { width: 24px; height: 12px; }
.link .size-grip { width: 14px; height: 16px; margin-left: auto; }
</style>
